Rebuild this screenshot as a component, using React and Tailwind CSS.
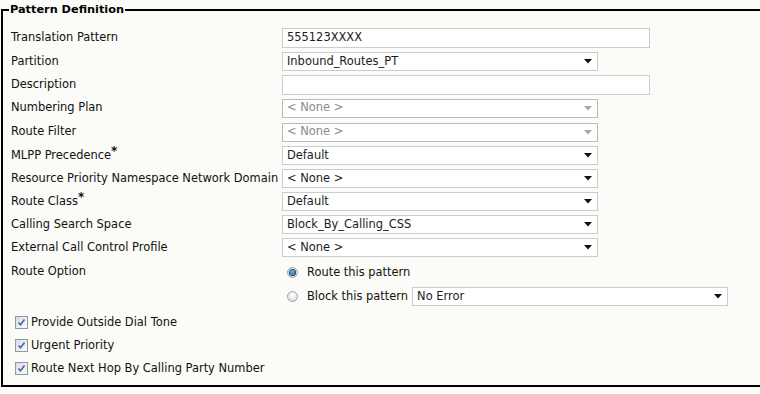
import React from "react";

const font = { fontFamily: '"DejaVu Sans", Verdana, sans-serif' };

function Arrow({ disabled }) {
  return (
    <svg width="8" height="5" viewBox="0 0 8 5" className="shrink-0">
      <path d="M0 0H8L4 4.5Z" fill={disabled ? "#a8a8a8" : "#111"} />
    </svg>
  );
}

function Select({ value, disabled, w = "w-[316px]" }) {
  return (
    <div
      className={`${w} h-[19px] flex items-center justify-between pl-[4px] pr-[5px] bg-white border ${
        disabled ? "border-[#b9bcbf] text-[#8a8a8a]" : "border-[#c9ccd0] text-[#1c1c1c]"
      }`}
    >
      <span className="leading-none">{value}</span>
      <Arrow disabled={disabled} />
    </div>
  );
}

function TextInput({ value }) {
  return (
    <div className="w-[368px] h-[20px] flex items-center pl-[4px] bg-white border border-[#c9ccd0] text-[#1c1c1c]">
      <span className="leading-none">{value}</span>
    </div>
  );
}

function Row({ label, star, children, h = "h-[23px]" }) {
  return (
    <div className={`grid grid-cols-[271px_1fr] items-center ${h}`}>
      <div className="text-[#111] leading-none whitespace-nowrap">
        {label}
        {star && <span className="relative -top-[4px] font-bold text-[12px]">*</span>}
      </div>
      <div>{children}</div>
    </div>
  );
}

function Radio({ checked }) {
  return (
    <span className="w-[11px] h-[11px] rounded-full border border-[#9aa2aa] bg-[radial-gradient(circle_at_50%_35%,#ffffff,#d4d6d8)] flex items-center justify-center shrink-0">
      {checked && (
        <span className="w-[5px] h-[5px] rounded-full bg-[radial-gradient(circle_at_40%_35%,#6fb8ef,#0a5c9e)] ring-1 ring-[#1b3f5e]" />
      )}
    </span>
  );
}

function Check({ label }) {
  return (
    <div className="flex items-center h-[23px] pl-[4px]">
      <span className="w-[13px] h-[13px] border border-[#8f9aa6] bg-[linear-gradient(135deg,#d8dde3,#fbfcfd)] flex items-center justify-center shrink-0">
        <svg width="9" height="9" viewBox="0 0 9 9">
          <path d="M1.5 4.5L3.5 6.8L7.5 1.5" fill="none" stroke="#4a62aa" strokeWidth="1.6" />
        </svg>
      </span>
      <span className="ml-[3px] text-[#111] leading-none">{label}</span>
    </div>
  );
}

export default function App() {
  return (
    <div className="w-[760px] h-[394px] overflow-hidden bg-[#fbfbf7] text-[11.45px] pt-[2px] pl-[1px]" style={font}>
      <fieldset className="border-2 border-r-0 border-black h-[385px]">
        <legend className="ml-[6px] px-[1px] font-bold text-[11.3px] leading-[16px] text-black">
          Pattern Definition
        </legend>
        <div className="flex flex-col pt-[7px] pl-[8px]">
          <Row label="Translation Pattern" h="h-[25px]">
            <TextInput value="555123XXXX" />
          </Row>
          <Row label="Partition">
            <Select value="Inbound_Routes_PT" />
          </Row>
          <Row label="Description">
            <TextInput value="" />
          </Row>
          <Row label="Numbering Plan" h="h-[24px]">
            <Select value="< None >" disabled />
          </Row>
          <Row label="Route Filter" h="h-[24px]">
            <Select value="< None >" disabled />
          </Row>
          <Row label="MLPP Precedence" star>
            <Select value="Default" />
          </Row>
          <Row label="Resource Priority Namespace Network Domain">
            <Select value="< None >" />
          </Row>
          <Row label="Route Class" star>
            <Select value="Default" />
          </Row>
          <Row label="Calling Search Space">
            <Select value="Block_By_Calling_CSS" />
          </Row>
          <Row label="External Call Control Profile">
            <Select value="< None >" />
          </Row>
          <div className="grid grid-cols-[271px_1fr] items-start">
            <div className="text-[#111] leading-none pt-[7px]">Route Option</div>
            <div className="flex flex-col pl-[5px] pt-[1px]">
              <div className="flex items-center h-[25px]">
                <Radio checked />
                <span className="ml-[9px] text-[#111] leading-none">Route this pattern</span>
              </div>
              <div className="flex items-center h-[23px]">
                <Radio />
                <span className="ml-[9px] mr-[4px] text-[#111] leading-none">Block this pattern</span>
                <Select value="No Error" />
              </div>
            </div>
          </div>
          <div className="flex flex-col pt-[3px]">
            <Check label="Provide Outside Dial Tone" />
            <Check label="Urgent Priority" />
            <Check label="Route Next Hop By Calling Party Number" />
          </div>
        </div>
      </fieldset>
    </div>
  );
}
